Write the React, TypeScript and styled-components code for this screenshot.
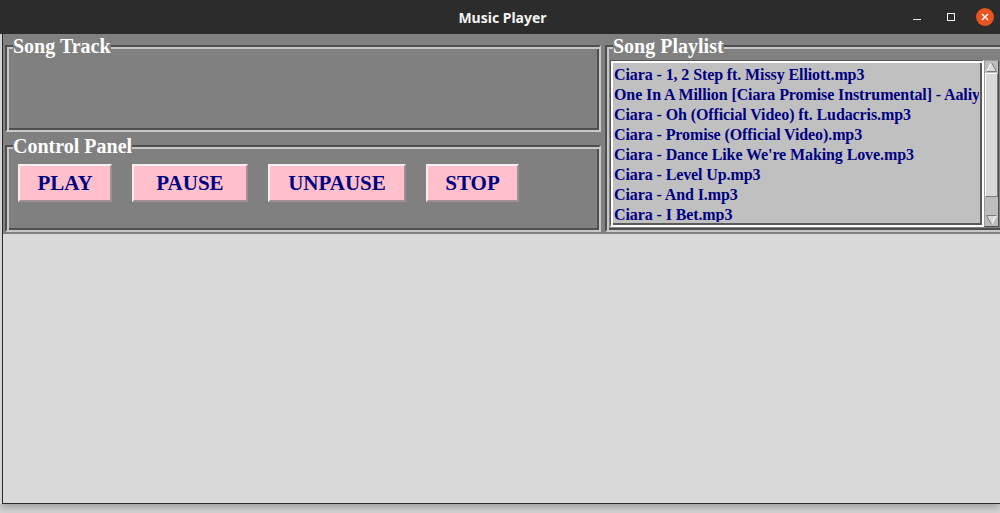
import React from 'react';
import styled, { createGlobalStyle } from 'styled-components';

const GlobalStyle = createGlobalStyle`
  html, body {
    margin: 0;
    padding: 0;
  }
  body {
    width: 1000px;
    height: 513px;
    overflow: hidden;
    background: #d4d4d4;
  }
`;

// Window chrome
const Window = styled.div`
  width: 1000px;
  height: 504px;
  display: flex;
  flex-direction: column;
  overflow: hidden;
  box-shadow: 0 3px 8px rgba(0, 0, 0, 0.28);
`;

const TitleBar = styled.div`
  height: 34px;
  flex: none;
  background: #2c2c2c;
  display: grid;
  grid-template-columns: 1fr auto 1fr;
  align-items: center;
`;

const Title = styled.div`
  grid-column: 2;
  padding-left: 5px;
  font-family: 'Noto Sans', 'DejaVu Sans', sans-serif;
  font-weight: 700;
  font-size: 14px;
  color: #f4f4f4;
`;

const Controls = styled.div`
  justify-self: end;
  display: flex;
  align-items: center;
  margin-right: 6px;
`;

const MinimizeIcon = styled.span`
  width: 8px;
  height: 1px;
  margin-top: 6px;
  border-top: 1px solid #eeeeee;
`;

const MaximizeIcon = styled.span`
  width: 6px;
  height: 6px;
  margin-left: 26px;
  margin-top: -1px;
  border: 1px solid #eeeeee;
`;

const CloseButton = styled.span`
  width: 18px;
  height: 18px;
  margin-left: 21px;
  border-radius: 50%;
  background: #e95420;
  display: flex;
  align-items: center;
  justify-content: center;
`;

const Client = styled.div`
  flex: 1;
  margin-left: 2px;
  border-left: 1px solid #2a2a2a;
  border-bottom: 1px solid #2a2a2a;
  background: #d9d9d9;
  display: grid;
  grid-template-columns: 600px 403px;
  align-items: start;
  align-content: start;
  overflow: hidden;
`;

const LeftColumn = styled.div`
  display: flex;
  flex-direction: column;
`;

// Tk LabelFrame look-alike
const Frame = styled.div<{ $h: number }>`
  height: ${p => p.$h}px;
  box-sizing: border-box;
  padding: 2px;
  background: #808080;
  display: flex;
`;

const Group = styled.fieldset`
  flex: 1;
  min-width: 0;
  margin: 0;
  padding: 0 3px 2px;
  box-sizing: border-box;
  border: 2px solid;
  border-color: #4f4f4f #c8c8c8 #c8c8c8 #4f4f4f;
  box-shadow: inset 2px 2px 0 #c8c8c8, inset -2px -2px 0 #4f4f4f;
`;

const Legend = styled.legend`
  margin-left: 3px;
  padding: 0;
  background: #808080;
  font-family: 'Liberation Serif', 'Times New Roman', serif;
  font-weight: 700;
  font-size: 20px;
  line-height: 20px;
  color: #ffffff;
`;

// Control panel
const ButtonRow = styled.div`
  display: flex;
  gap: 20px;
  padding: 8px 0 0 8px;
`;

const PlayerButton = styled.button<{ $w: number }>`
  width: ${p => p.$w}px;
  height: 38px;
  box-sizing: border-box;
  padding: 0;
  background: #ffc0cb;
  border: 2px solid;
  border-color: #f6eef0 #a28f93 #a28f93 #f6eef0;
  font-family: 'Liberation Serif', 'Times New Roman', serif;
  font-weight: 700;
  font-size: 21px;
  color: #000080;
`;

// Playlist
const ListArea = styled.div`
  display: flex;
  height: 167px;
  margin-top: 4px;
`;

const ListBox = styled.ul`
  flex: 1;
  min-width: 0;
  margin: 0;
  padding: 4px 3px 3px;
  list-style: none;
  overflow: clip;
  overflow-clip-margin: content-box;
  background: #c0c0c0;
  border-style: solid;
  border-width: 1px 2px 2px 1px;
  border-color: #555555 #ffffff #ffffff #555555;
  box-shadow: inset 2px 2px 0 #ffffff, inset -2px -2px 0 #5a5a5a;
`;

const Track = styled.li`
  font-family: 'Liberation Serif', 'Times New Roman', serif;
  font-weight: 700;
  font-size: 16px;
  line-height: 20px;
  letter-spacing: -0.1px;
  color: #000080;
  white-space: nowrap;
`;

const ScrollBar = styled.div`
  width: 15px;
  flex: none;
  box-sizing: border-box;
  display: flex;
  flex-direction: column;
  background: #bdbdbd;
  border-style: solid;
  border-width: 1px;
  border-color: #9a9a9a #4d4d4d #4d4d4d #9a9a9a;
`;

const Arrow = styled.div`
  height: 12px;
  flex: none;
  display: flex;
  align-items: center;
  justify-content: center;
`;

const Thumb = styled.div`
  height: 124px;
  flex: none;
  box-sizing: border-box;
  background: #d9d9d9;
  border: 1px solid;
  border-color: #ffffff #7a7a7a #7a7a7a #ffffff;
`;

const Trough = styled.div`
  flex: 1;
`;

const songs = [
  'Ciara - 1, 2 Step ft. Missy Elliott.mp3',
  'One In A Million [Ciara Promise Instrumental] - Aaliyah.mp3',
  'Ciara - Oh (Official Video) ft. Ludacris.mp3',
  'Ciara - Promise (Official Video).mp3',
  "Ciara - Dance Like We're Making Love.mp3",
  'Ciara - Level Up.mp3',
  'Ciara - And I.mp3',
  'Ciara - I Bet.mp3',
];

const buttons = [
  { label: 'PLAY', width: 94 },
  { label: 'PAUSE', width: 116 },
  { label: 'UNPAUSE', width: 138 },
  { label: 'STOP', width: 93 },
];

const ArrowIcon: React.FC<{ down?: boolean }> = ({ down }) => (
  <svg width="11" height="10" viewBox="0 0 11 10">
    <g transform={down ? 'rotate(180 5.5 5)' : undefined}>
      <polygon points="5.5,0.5 10.5,9.5 0.5,9.5" fill="#d9d9d9" />
      <polyline points="0.5,9.5 5.5,0.5" fill="none" stroke="#ffffff" strokeWidth="1" />
      <polyline points="5.5,0.5 10.5,9.5 0.5,9.5" fill="none" stroke="#7a7a7a" strokeWidth="1" />
    </g>
  </svg>
);

const App: React.FC = () => {
  return (
    <>
      <GlobalStyle />
      <Window>
        <TitleBar>
          <Title>Music Player</Title>
          <Controls>
            <MinimizeIcon />
            <MaximizeIcon />
            <CloseButton>
              <svg width="8" height="8" viewBox="0 0 8 8">
                <path d="M1 1 L7 7 M7 1 L1 7" stroke="#ffffff" strokeWidth="1.4" />
              </svg>
            </CloseButton>
          </Controls>
        </TitleBar>

        <Client>
          <LeftColumn>
            <Frame $h={100}>
              <Group>
                <Legend>Song Track</Legend>
              </Group>
            </Frame>
            <Frame $h={100}>
              <Group>
                <Legend>Control Panel</Legend>
                <ButtonRow>
                  {buttons.map(b => (
                    <PlayerButton key={b.label} $w={b.width}>
                      {b.label}
                    </PlayerButton>
                  ))}
                </ButtonRow>
              </Group>
            </Frame>
          </LeftColumn>

          <Frame $h={200}>
            <Group>
              <Legend>Song Playlist</Legend>
              <ListArea>
                <ListBox>
                  {songs.map(s => (
                    <Track key={s}>{s}</Track>
                  ))}
                </ListBox>
                <ScrollBar>
                  <Arrow>
                    <ArrowIcon />
                  </Arrow>
                  <Thumb />
                  <Trough />
                  <Arrow>
                    <ArrowIcon down />
                  </Arrow>
                </ScrollBar>
              </ListArea>
            </Group>
          </Frame>
        </Client>
      </Window>
    </>
  );
};

export default App;
